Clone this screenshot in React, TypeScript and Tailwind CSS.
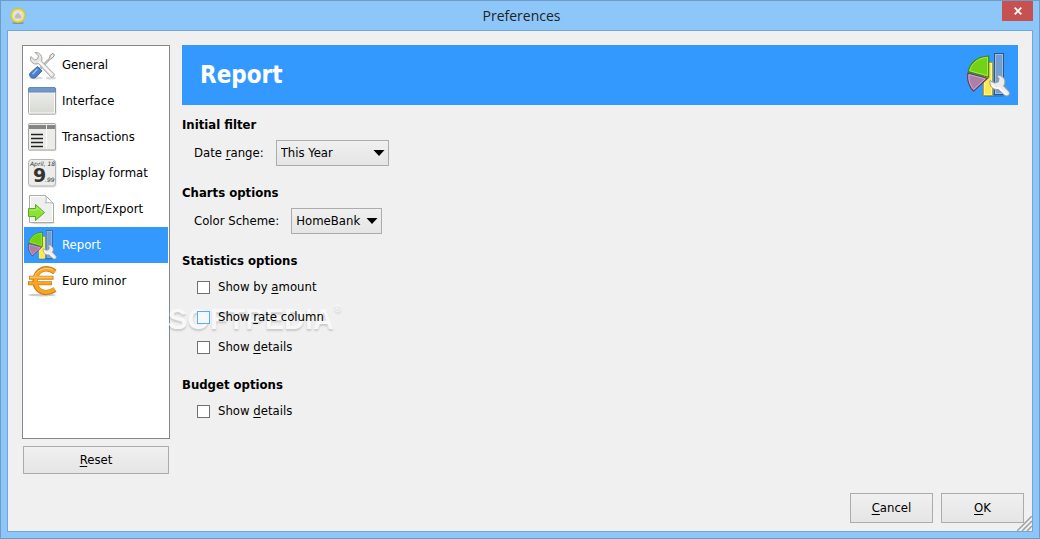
import React, { useState } from "react";

type PageId = "general" | "interface" | "transactions" | "display" | "import" | "report" | "euro";

const WRENCH =
    "M9 3.5 L12.5 7 L11.5 10 L8.5 11 L4.8 7.5 C3.6 11 5.6 15 10 15 L12.5 14.6 L24.5 27.5 C26.5 29.5 29.6 26.6 27.6 24.4 L15.6 12.2 C17 7.5 14 3 9 3.5 Z";

const GeneralIcon = () => (
    <svg viewBox="0 0 32 32" className="size-8 shrink-0" aria-hidden="true">
        <ellipse cx="10" cy="29" rx="7" ry="1.5" fill="#000" opacity=".15" />
        <ellipse cx="25" cy="29" rx="5" ry="1.5" fill="#000" opacity=".15" />
        <path d="M13 19.5 L23.6 9 L24.4 6 L27 4.4 L28.4 6 L26.8 8.6 L24.6 9.8 L14.4 20.6 Z" fill="#eee" stroke="#8b8d88" strokeWidth="1" />
        <path d="M11.5 17.5 L16 21.8 L10 28.2 C7 30.8 1.8 27.6 4.2 24 Z" fill="#4a7fc9" stroke="#3a66a8" strokeWidth="1" />
        <path d="M11.5 20 L6.6 25.2" stroke="#9dbde8" strokeWidth="1.6" />
        <path d={WRENCH} fill="#e6e7e4" stroke="#a2a49f" strokeWidth="1" />
        <path d="M13 12.5 L26 26" stroke="#fff" strokeWidth="1.2" />
    </svg>
);

const InterfaceIcon = () => (
    <svg viewBox="0 0 32 32" className="size-8 shrink-0" aria-hidden="true">
        <defs>
            <linearGradient id="window-body" x1="0" y1="0" x2="0" y2="1">
                <stop offset="0" stopColor="#f1f1ef" />
                <stop offset="1" stopColor="#d6d9d2" />
            </linearGradient>
        </defs>
        <rect x="2.5" y="3" width="28" height="27" rx="1.5" fill="#000" opacity=".12" />
        <rect x="2.5" y="2.5" width="27" height="26.5" rx="1.5" fill="url(#window-body)" stroke="#a3a5a0" />
        <rect x="3.5" y="7" width="25" height="21" fill="none" stroke="#fafafa" />
        <path d="M2.5 7 V4 Q2.5 2.5 4 2.5 H28 Q29.5 2.5 29.5 4 V7 Z" fill="#7297c8" stroke="#6287b8" />
    </svg>
);

const TransactionsIcon = () => (
    <svg viewBox="0 0 32 32" className="size-8 shrink-0" aria-hidden="true">
        <rect x="2.5" y="3" width="28" height="27" rx="1" fill="#000" opacity=".12" />
        <rect x="2.5" y="2.5" width="27" height="26.5" rx="1" fill="#ecece9" stroke="#a7a8a5" />
        <path d="M3 4 H20 V8 H3 Z M21 4 H29 V8 H21 Z" fill="#858683" />
        <path d="M20.5 9 V28" stroke="#fff" />
        <path d="M5 13.5 H17 M5 17.5 H17 M5 21.5 H17 M5 25.5 H17" stroke="#242424" strokeWidth="1.7" />
    </svg>
);

const DisplayIcon = () => (
    <svg viewBox="0 0 32 32" className="size-8 shrink-0" aria-hidden="true">
        <rect x="2.5" y="3.5" width="28" height="27" rx="3" fill="#000" opacity=".12" />
        <rect x="2.5" y="2.5" width="27" height="26.5" rx="3" fill="#ececea" stroke="#b5b6b3" />
        <g fill="#333" fontFamily="DejaVu Sans, sans-serif">
            <text x="4" y="9" fontSize="6" fontStyle="italic">April, 18</text>
            <text x="7" y="25" fontSize="19" fontWeight="700">9</text>
            <text x="19" y="25" fontSize="6" fontStyle="italic">.99</text>
        </g>
    </svg>
);

const ImportIcon = () => (
    <svg viewBox="0 0 32 32" className="size-8 shrink-0" aria-hidden="true">
        <ellipse cx="17" cy="30" rx="12" ry="1.3" fill="#000" opacity=".15" />
        <path d="M3.5 2.5 H19.5 L27.5 10.5 V29.5 H3.5 Z" fill="#efefed" stroke="#a9aba7" />
        <path d="M4.5 3.5 H19 L26.5 11 V28.5 H4.5 Z" fill="none" stroke="#fff" />
        <path d="M19.5 2.5 C20.5 5 20.5 7 19.5 10 C22 9.3 25 9.5 27.5 10.5 Z" fill="#fff" stroke="#a9aba7" strokeWidth=".9" />
        <path d="M2.5 15.5 H9.5 V11.5 L18.5 19.5 L9.5 27.5 V23.5 H2.5 Z" fill="#8ae234" stroke="#57a820" />
        <path d="M3.5 17 H10.8 V14.2 L17 19.5" fill="none" stroke="#b2ef75" />
    </svg>
);

const ReportIcon = ({ className }: { className: string }) => (
    <svg viewBox="0 0 48 48" className={className} aria-hidden="true">
        <ellipse cx="30" cy="44.5" rx="12" ry="1.6" fill="#000" opacity=".15" />
        <rect x="30.5" y="2.5" width="9" height="41" fill="#729fcf" stroke="#2f5688" />
        <rect x="31.5" y="3.5" width="7" height="39" fill="none" stroke="#9dbce0" />
        <rect x="19.5" y="11.5" width="9" height="33" fill="#fce94f" stroke="#c4a000" />
        <rect x="20.5" y="12.5" width="7" height="31" fill="none" stroke="#fff59a" />
        <path d="M24.7 5 C14 5.5 6 11.5 4.3 20.7 L24.7 26.3 Z" fill="#73d216" stroke="#3c8a04" strokeWidth="1.2" />
        <path d="M23.5 6.3 C14 7 7.5 12 5.7 19.8 L23.5 24.7 Z" fill="none" stroke="#a5ec60" strokeWidth=".9" />
        <path d="M3.8 22.2 L23.5 27.3 L9.6 40.2 C4.5 35 3 29 3.8 22.2 Z" fill="#ad7fa8" stroke="#633d62" strokeWidth="1.2" />
        <path d="M4.9 23.6 L21.2 27.8 L9.7 38.5 C5.8 34 4.5 29.5 4.9 23.6 Z" fill="none" stroke="#d1afce" strokeWidth=".9" />
        <path
            d="M32.5 24.5 L35 27.5 L34.3 30.8 L30.8 32 L26 29.6 C25 34.8 28.6 39.4 34.4 38.5 L40 43.8 C43 46.8 47.4 43.2 44.6 40.2 L39.6 35 C43.4 29.5 38.8 23.4 32.5 24.5 Z"
            fill="#ececea"
            stroke="#9a9c97"
        />
        <path d="M28 33.5 C29.5 37 32 37.3 35 36.8 L42.5 43.5" fill="none" stroke="#fff" strokeWidth="1.3" />
    </svg>
);

const EuroIcon = () => (
    <svg viewBox="0 0 32 32" className="size-8 shrink-0" aria-hidden="true">
        <ellipse cx="16" cy="30" rx="14" ry="1.5" fill="#000" opacity=".2" />
        <g fill="none" strokeLinejoin="round">
            <path d="M29 7 C20 .5 9.5 4.5 9 16 C9.5 27.5 20 30.5 29 24.5" stroke="#c9811f" strokeWidth="5.4" />
            <path d="M3 12.8 H27.5 M2 18.2 H26" stroke="#c9811f" strokeWidth="4" />
            <path d="M28.7 6.8 C20 .8 9.9 5 9.4 16 C9.9 27 20 30 28.7 24.3" stroke="#fba41f" strokeWidth="3.6" />
            <path d="M3.6 12.8 H26.8 M2.7 18.2 H25.3" stroke="#fba41f" strokeWidth="2.4" />
            <path d="M27 4.8 C19 1.4 10 5.3 8.6 11.8 M4 12.2 H26" stroke="#ffd084" strokeWidth="1" />
        </g>
    </svg>
);

const PAGES: { id: PageId; label: string; icon: React.ReactNode }[] = [
    { id: "general", label: "General", icon: <GeneralIcon /> },
    { id: "interface", label: "Interface", icon: <InterfaceIcon /> },
    { id: "transactions", label: "Transactions", icon: <TransactionsIcon /> },
    { id: "display", label: "Display format", icon: <DisplayIcon /> },
    { id: "import", label: "Import/Export", icon: <ImportIcon /> },
    { id: "report", label: "Report", icon: <ReportIcon className="size-8 shrink-0" /> },
    { id: "euro", label: "Euro minor", icon: <EuroIcon /> },
];

const Section = ({ title, children }: { title: string; children: React.ReactNode }) => (
    <section className="flex flex-col gap-1.5">
        <h2 className="font-bold">{title}</h2>
        {children}
    </section>
);

type SelectProps = { id: string; label: React.ReactNode; options: string[]; className: string };

const SelectRow = ({ id, label, options, className }: SelectProps) => (
    <div className="flex items-center gap-3 pl-3">
        <label htmlFor={id}>{label}</label>
        <div className={`relative ${className}`}>
            <select
                id={id}
                className="block h-[26px] w-full appearance-none border border-[#acacac] bg-linear-to-b from-[#f0f0f0] to-[#e5e5e5] pl-1 pr-5"
            >
                {options.map((o) => (
                    <option key={o}>{o}</option>
                ))}
            </select>
            <svg viewBox="0 0 12 6" className="pointer-events-none absolute right-1 top-2.5 h-1.5 w-3" aria-hidden="true">
                <path d="M.5 0 H11.5 L6 6 Z" fill="#000" />
            </svg>
        </div>
    </div>
);

type CheckProps = { before: string; mnemonic: string; after: string; hot?: boolean };

const CheckRow = ({ before, mnemonic, after, hot }: CheckProps) => (
    <label className="flex h-[22px] items-center gap-2 pl-[15px]">
        <input
            type="checkbox"
            className={`size-[13px] appearance-none border checked:bg-[#3399ff] ${hot ? "border-[#5aacfb] bg-[#f3f9ff]" : "border-[#707070] bg-white"}`}
        />
        <span>
            {before}
            <u className="underline-offset-2">{mnemonic}</u>
            {after}
        </span>
    </label>
);

const BUTTON = "border border-[#acacac] bg-linear-to-b from-[#f0f0f0] to-[#e5e5e5] hover:border-[#3399ff]";

const App: React.FC = () => {
    const [page, setPage] = useState<PageId>("report");
    const title = PAGES.find((p) => p.id === page)!.label;

    return (
        <div className="flex min-h-screen flex-col border border-[#6f9bc4] bg-[#8dc7f9] px-1.5 pb-1.5 font-['DejaVu_Sans_Condensed','DejaVu_Sans',sans-serif] text-[13px] leading-[18px] text-black">
            <header className="flex h-[29px] items-start">
                <div className="flex h-full flex-1 items-center pl-[3px]">
                    <svg viewBox="0 0 16 16" className="size-4" aria-hidden="true">
                        <ellipse cx="8" cy="15" rx="6" ry="1" fill="#567" opacity=".5" />
                        <circle cx="8" cy="7.5" r="6.5" fill="#e2e2df" stroke="#edd82b" strokeWidth="1.8" />
                        <circle cx="8" cy="7.5" r="7.3" fill="none" stroke="#c7ad23" strokeWidth=".5" />
                        <path d="M4.8 8 L8 4.5 L11.2 8 V10.5 H4.8 Z" fill="#bdbdb9" />
                    </svg>
                </div>
                <h1 className="self-center font-['Open_Sans',sans-serif] text-sm text-[#222]">Preferences</h1>
                <div className="flex flex-1 justify-end">
                    <button type="button" aria-label="Close" className="flex h-5 w-[31px] items-center justify-center bg-[#c75050]">
                        <svg viewBox="0 0 8 8" className="size-2" aria-hidden="true">
                            <path d="M.7 .7 L7.3 7.3 M7.3 .7 L.7 7.3" stroke="#fff" strokeWidth="1.8" />
                        </svg>
                    </button>
                </div>
            </header>

            <div className="relative flex flex-1 flex-col border border-[#74a6d6] bg-[#f0f0f0] pb-2">
                <div className="flex flex-1 gap-3 pl-3.5 pr-3.5 pt-3.5">
                    <aside className="flex w-[148px] shrink-0 flex-col gap-[7px]">
                        <nav className="flex-1 border border-[#828790] bg-white px-px py-px">
                            <ul>
                                {PAGES.map((p) => (
                                    <li key={p.id}>
                                        <button
                                            type="button"
                                            onClick={() => setPage(p.id)}
                                            className={`flex h-9 w-full items-center gap-1 pl-0.5 text-left ${p.id === page ? "bg-[#3399ff] text-white" : ""}`}
                                        >
                                            {p.icon}
                                            {p.label}
                                        </button>
                                    </li>
                                ))}
                            </ul>
                        </nav>
                        <button type="button" className={`mx-px h-7 ${BUTTON}`}>
                            <u className="underline-offset-2">R</u>eset
                        </button>
                    </aside>

                    <main className="relative flex-1">
                        <div className="flex h-[60px] items-center justify-between bg-[#3399ff] pl-[18px] pr-1.5">
                            <h2 className="text-2xl font-bold text-white">{title}</h2>
                            <ReportIcon className="size-12" />
                        </div>
                        {/* watermark, kept under the form */}
                        <div className="pointer-events-none absolute -left-3.5 top-64 flex items-start font-['Liberation_Sans',sans-serif] text-[29px] font-bold leading-9 text-[#f8f8f8] [text-shadow:0_2px_2px_rgb(0_0_0/0.16)]">
                            SOFTPEDIA<span className="text-[10px] leading-4">®</span>
                        </div>
                        <form className="relative mt-[11px] flex flex-col gap-[18px]">
                            <Section title="Initial filter">
                                <SelectRow
                                    id="date-range"
                                    label={<>Date <u className="underline-offset-2">r</u>ange:</>}
                                    options={["This Year", "This Month", "Last Year"]}
                                    className="w-[113px]"
                                />
                            </Section>
                            <Section title="Charts options">
                                <SelectRow id="color-scheme" label="Color Scheme:" options={["HomeBank", "Money"]} className="w-[91px]" />
                            </Section>
                            <Section title="Statistics options">
                                <div className="flex flex-col gap-2">
                                    <CheckRow before="Show by " mnemonic="a" after="mount" />
                                    <CheckRow before="Show " mnemonic="r" after="ate column" hot />
                                    <CheckRow before="Show " mnemonic="d" after="etails" />
                                </div>
                            </Section>
                            <Section title="Budget options">
                                <CheckRow before="Show " mnemonic="d" after="etails" />
                            </Section>
                        </form>
                    </main>
                </div>

                <footer className="mt-[19px] flex justify-end gap-2 pr-2">
                    <button type="button" className={`h-[30px] w-[83px] ${BUTTON}`}>
                        <u className="underline-offset-2">C</u>ancel
                    </button>
                    <button type="button" className={`h-[30px] w-[83px] ${BUTTON}`}>
                        <u className="underline-offset-2">O</u>K
                    </button>
                </footer>
                <svg viewBox="0 0 15 15" className="absolute bottom-0 right-0 size-[15px]" aria-hidden="true">
                    <path d="M0 15 L15 0 V15 Z" fill="#f0f0f0" />
                    <path d="M0 15 L15 0 M5 15 L15 5 M10 15 L15 10" stroke="#a0a0a0" strokeWidth="1.5" />
                </svg>
            </div>
        </div>
    );
};

export default App;
